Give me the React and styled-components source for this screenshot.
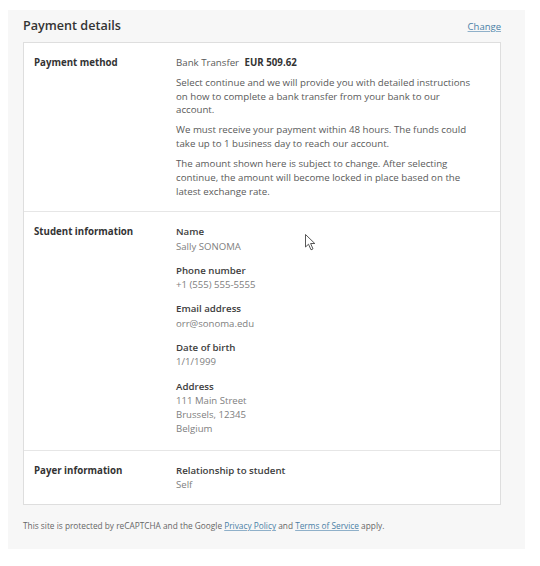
import React from "react";
import styled, { createGlobalStyle } from "styled-components";

const Global = createGlobalStyle`
  html, body { margin: 0; padding: 0; background: #ffffff; }
  body { font-family: "Open Sans", "Noto Sans", sans-serif; -webkit-font-smoothing: antialiased; }
  * { box-sizing: border-box; }
`;

const Panel = styled.div`
  position: relative;
  width: 517px;
  margin: 10px 0 0 8px;
  background: #f7f7f7;
  padding: 6px 24px 17px 15px;
`;

const Header = styled.div`
  display: flex;
  justify-content: space-between;
  align-items: baseline;
  height: 26px;
`;

const Title = styled.h2`
  margin: 0;
  font-size: 12.6px;
  font-weight: 600;
  color: #333;
  line-height: 20px;
`;

const Link = styled.a`
  color: #4a7fa6;
  text-decoration: underline;
  text-decoration-color: #8fb0c9;
  text-underline-offset: 1px;
  cursor: pointer;
`;

const ChangeLink = styled(Link)`
  font-size: 9.5px;
`;

const Card = styled.div`
  background: #fff;
  border: 1px solid #dedede;
`;

const Section = styled.div`
  display: grid;
  grid-template-columns: 142px 300px;
  padding: 13px 10px ${(p) => (p.$last ? "12px" : "13px")} 10px;
  border-top: ${(p) => (p.$first ? "none" : "1px solid #e6e6e6")};
`;

const SectionLabel = styled.div`
  font-size: 9.7px;
  font-weight: 700;
  color: #333;
  line-height: 13.7px;
`;

const Content = styled.div`
  font-size: 9.7px;
  color: #5a5a5a;
  line-height: 13.7px;
`;

const Para = styled.p`
  margin: 0 0 6.3px 0;
  &:last-child { margin-bottom: 0; }
`;

const Amount = styled.strong`
  font-weight: 700;
  color: #333;
  margin-left: 3px;
`;

const Field = styled.div`
  margin-bottom: 10px;
  line-height: 14.3px;
  &:last-child { margin-bottom: 0; }
`;

const FieldName = styled.div`
  font-weight: 600;
  color: #3d3d3d;
  font-size: 9.7px;
`;

const FieldValue = styled.div`
  color: #808080;
  font-size: 9.6px;
`;

const Footer = styled.p`
  margin: 14px 0 0 0;
  font-size: 8.3px;
  color: #666;
  line-height: 13px;
`;

const Cursor = styled.svg`
  position: absolute;
  left: 297px;
  top: 224px;
  width: 11px;
  height: 17px;
`;

const fields = [
  { name: "Name", value: ["Sally SONOMA"] },
  { name: "Phone number", value: ["+1 (555) 555-5555"] },
  { name: "Email address", value: ["orr@sonoma.edu"] },
  { name: "Date of birth", value: ["1/1/1999"] },
  { name: "Address", value: ["111 Main Street", "Brussels, 12345", "Belgium"] },
];

export default function App() {
  return (
    <>
      <Global />
      <Panel>
        <Header>
          <Title>Payment details</Title>
          <ChangeLink>Change</ChangeLink>
        </Header>
        <Card>
          <Section $first>
            <SectionLabel>Payment method</SectionLabel>
            <Content>
              <Para>
                Bank Transfer <Amount>EUR 509.62</Amount>
              </Para>
              <Para>
                Select continue and we will provide you with detailed instructions on how to complete a bank transfer from your bank to our account.
              </Para>
              <Para>
                We must receive your payment within 48 hours. The funds could take up to 1 business day to reach our account.
              </Para>
              <Para>
                The amount shown here is subject to change. After selecting continue, the amount will become locked in place based on the latest exchange rate.
              </Para>
            </Content>
          </Section>
          <Section>
            <SectionLabel>Student information</SectionLabel>
            <Content>
              {fields.map((f) => (
                <Field key={f.name}>
                  <FieldName>{f.name}</FieldName>
                  {f.value.map((v) => (
                    <FieldValue key={v}>{v}</FieldValue>
                  ))}
                </Field>
              ))}
            </Content>
          </Section>
          <Section $last>
            <SectionLabel>Payer information</SectionLabel>
            <Content>
              <Field>
                <FieldName>Relationship to student</FieldName>
                <FieldValue>Self</FieldValue>
              </Field>
            </Content>
          </Section>
        </Card>
        <Footer>
          This site is protected by reCAPTCHA and the Google <Link>Privacy Policy</Link> and <Link>Terms of Service</Link> apply.
        </Footer>
        <Cursor viewBox="0 0 11 17">
          <path d="M0.5 0.5 L0.5 13 L3.5 10.2 L6 15.8 L8 14.9 L5.6 9.5 L9.8 9.5 Z" fill="#fff" stroke="#444" strokeWidth="0.9" strokeLinejoin="round" />
        </Cursor>
      </Panel>
    </>
  );
}
